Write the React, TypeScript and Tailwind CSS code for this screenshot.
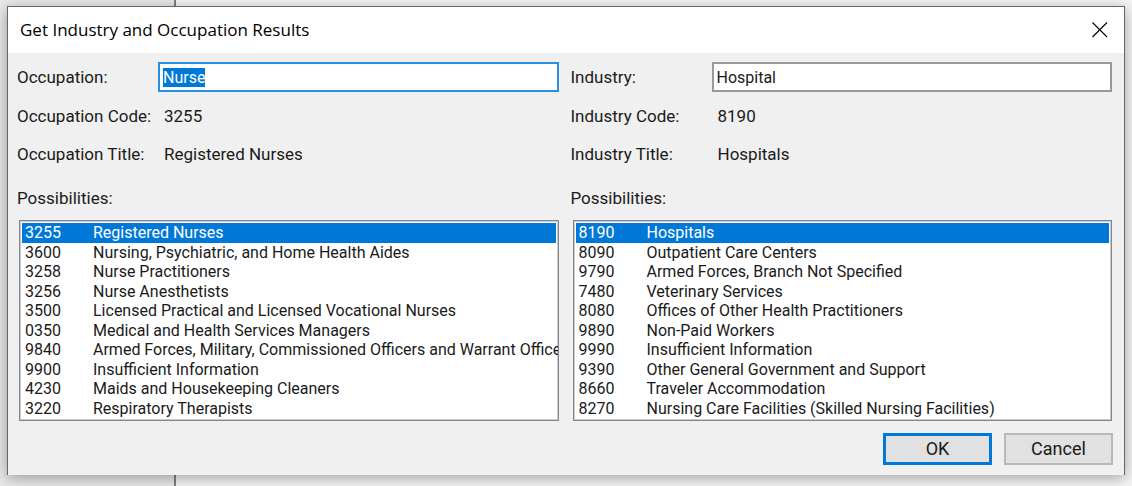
import React, { useEffect, useRef, useState } from "react";

interface Possibility {
  code: string;
  title: string;
}

interface ResultColumnProps {
  id: string;
  name: string;
  defaultText: string;
  possibilities: Possibility[];
  focused?: boolean;
}

const occupations: Possibility[] = [
  { code: "3255", title: "Registered Nurses" },
  { code: "3600", title: "Nursing, Psychiatric, and Home Health Aides" },
  { code: "3258", title: "Nurse Practitioners" },
  { code: "3256", title: "Nurse Anesthetists" },
  { code: "3500", title: "Licensed Practical and Licensed Vocational Nurses" },
  { code: "0350", title: "Medical and Health Services Managers" },
  {
    code: "9840",
    title: "Armed Forces, Military, Commissioned Officers and Warrant Office",
  },
  { code: "9900", title: "Insufficient Information" },
  { code: "4230", title: "Maids and Housekeeping Cleaners" },
  { code: "3220", title: "Respiratory Therapists" },
];

const industries: Possibility[] = [
  { code: "8190", title: "Hospitals" },
  { code: "8090", title: "Outpatient Care Centers" },
  { code: "9790", title: "Armed Forces, Branch Not Specified" },
  { code: "7480", title: "Veterinary Services" },
  { code: "8080", title: "Offices of Other Health Practitioners" },
  { code: "9890", title: "Non-Paid Workers" },
  { code: "9990", title: "Insufficient Information" },
  { code: "9390", title: "Other General Government and Support" },
  { code: "8660", title: "Traveler Accommodation" },
  { code: "8270", title: "Nursing Care Facilities (Skilled Nursing Facilities)" },
];

const ResultColumn: React.FC<ResultColumnProps> = ({
  id,
  name,
  defaultText,
  possibilities,
  focused,
}) => {
  const [text, setText] = useState(defaultText);
  const [selected, setSelected] = useState(0);
  const inputRef = useRef<HTMLInputElement>(null);
  const current = possibilities[selected];

  useEffect(() => {
    if (focused) {
      inputRef.current?.focus();
      inputRef.current?.select();
    }
  }, [focused]);

  return (
    <section className="min-w-0">
      <div className="flex items-center">
        <label htmlFor={id} className="w-[141px] shrink-0 text-[17px]">
          {name}:
        </label>
        <input
          ref={inputRef}
          id={id}
          type="text"
          value={text}
          onChange={(e) => setText(e.target.value)}
          className="h-[30px] min-w-0 flex-1 border-2 border-[#999999] bg-white px-[3px] outline-none selection:bg-[#0078d7] selection:text-white focus:border-[#2b8fdf]"
        />
      </div>
      <dl className="mt-[5px] text-[17px]">
        <div className="flex h-[38px] items-center">
          <dt className="w-[147px] shrink-0">{name} Code:</dt>
          <dd>{current.code}</dd>
        </div>
        <div className="flex h-[38px] items-center">
          <dt className="w-[147px] shrink-0">{name} Title:</dt>
          <dd className="truncate">{current.title}</dd>
        </div>
      </dl>
      <h2
        id={`${id}-list`}
        className="mt-[3px] flex h-11 items-center text-[17px]"
      >
        Possibilities:
      </h2>
      <ul
        role="listbox"
        aria-labelledby={`${id}-list`}
        className="ml-[2px] flex h-[201px] flex-col overflow-hidden border border-[#82878f] bg-white p-[2px] ring-1 ring-[#c8cbcf] ring-inset"
      >
        {possibilities.map((item, index) => (
          <li
            key={item.code}
            role="option"
            aria-selected={index === selected}
            onClick={() => setSelected(index)}
            className="flex min-h-0 flex-1 cursor-default items-center pt-px pl-[3px] whitespace-nowrap aria-selected:bg-[#0078d7] aria-selected:text-white"
          >
            <span className="w-[68px] shrink-0">{item.code}</span>
            <span>{item.title}</span>
          </li>
        ))}
      </ul>
    </section>
  );
};

const App: React.FC = () => {
  return (
    <div className="grid min-h-screen overflow-hidden">
      <div className="col-start-1 row-start-1 flex bg-[#f5f5f5]">
        <div className="w-[176px] border-r-2 border-[#808080] bg-[#e9e9e9]" />
      </div>
      <main
        role="dialog"
        aria-labelledby="dialog-title"
        className="col-start-1 row-start-1 mx-[7px] mt-[6px] mb-[11px] min-w-0 border border-b-0 border-[#666666] bg-[#f0f0f0] font-[Roboto,'Liberation_Sans',sans-serif] text-base leading-5 text-[#1a1a1a] shadow-[0_3px_14px_rgba(0,0,0,0.35)]"
      >
        <header className="flex h-[46px] items-center justify-between bg-white pr-4 pl-3">
          <h1
            id="dialog-title"
            className="font-['Open_Sans','Noto_Sans',sans-serif] text-[17px] text-black"
          >
            Get Industry and Occupation Results
          </h1>
          <button type="button" aria-label="Close">
            <svg width="16" height="16" viewBox="0 0 16 16" fill="none" stroke="black">
              <path d="M0.5 0.5l14.5 14.5M15 0.5l-14.5 14.5" strokeWidth="1.1" />
            </svg>
          </button>
        </header>
        <div className="grid grid-cols-2 gap-3 pt-[9px] pr-3 pl-[9px]">
          <ResultColumn
            id="occupation"
            name="Occupation"
            defaultText="Nurse"
            possibilities={occupations}
            focused
          />
          <ResultColumn
            id="industry"
            name="Industry"
            defaultText="Hospital"
            possibilities={industries}
          />
        </div>
        <footer className="flex justify-end gap-3 pt-3 pr-[11px] pb-[10px]">
          <button
            type="button"
            className="h-8 w-[109px] border-3 border-[#0078d7] bg-[#e1e1e1] text-lg leading-5"
          >
            OK
          </button>
          <button
            type="button"
            className="h-8 w-[109px] border-2 border-[#b8b8b8] bg-[#e1e1e1] text-lg leading-5"
          >
            Cancel
          </button>
        </footer>
      </main>
    </div>
  );
};

export default App;
